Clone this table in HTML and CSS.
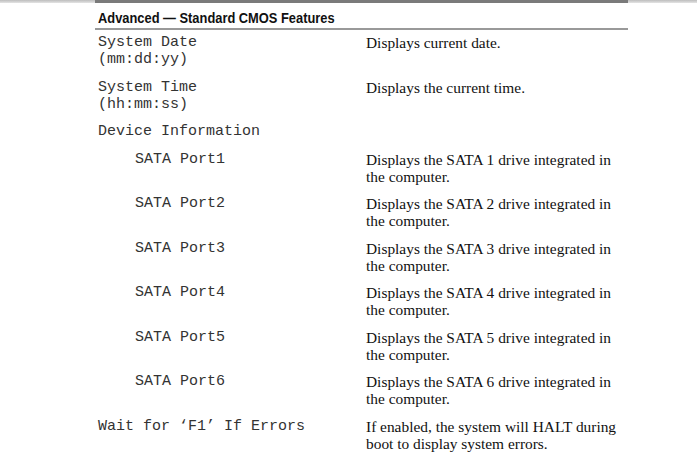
FILE: index.html
```html
<!DOCTYPE html>
<html>
<head>
<meta charset="utf-8">
<link rel="stylesheet" href="styles.css">
</head>
<body>
<div class="topbar"></div>
<div class="table">
  <div class="head"><span class="head-text">Advanced — Standard CMOS Features</span></div>
  <div class="row first"><div class="key">System Date<br>(mm:dd:yy)</div><div class="desc">Displays current date.</div></div>
  <div class="row"><div class="key">System Time<br>(hh:mm:ss)</div><div class="desc">Displays the current time.</div></div>
  <div class="row"><div class="key">Device Information</div><div class="desc"></div></div>
  <div class="row"><div class="key sub">SATA Port1</div><div class="desc">Displays the SATA 1 drive integrated in<br>the computer.</div></div>
  <div class="row"><div class="key sub">SATA Port2</div><div class="desc">Displays the SATA 2 drive integrated in<br>the computer.</div></div>
  <div class="row"><div class="key sub">SATA Port3</div><div class="desc">Displays the SATA 3 drive integrated in<br>the computer.</div></div>
  <div class="row"><div class="key sub">SATA Port4</div><div class="desc">Displays the SATA 4 drive integrated in<br>the computer.</div></div>
  <div class="row"><div class="key sub">SATA Port5</div><div class="desc">Displays the SATA 5 drive integrated in<br>the computer.</div></div>
  <div class="row"><div class="key sub">SATA Port6</div><div class="desc">Displays the SATA 6 drive integrated in<br>the computer.</div></div>
  <div class="row"><div class="key">Wait for ‘F1’ If Errors</div><div class="desc">If enabled, the system will HALT during<br>boot to display system errors.</div></div>
</div>
</body>
</html>
```
FILE: styles.css
```css
html, body {
  margin: 0;
  padding: 0;
  background: #fff;
}
body {
  color: #1a1a1a;
}
.topbar {
  height: 3px;
  background: linear-gradient(#bdbdbd, #e4e4e4);
}
.table {
  margin: -3px 0 0 95px;
  width: 533px;
  border-top: 3px solid #7a7a7a;
}
.head {
  font-family: "Liberation Sans", sans-serif;
  font-weight: bold;
  font-size: 15.5px;
  line-height: 17px;
  padding: 6px 3px 2px;
  border-bottom: 2px solid #999;
  color: #111;
}
.head-text {
  display: inline-block;
  transform: scaleX(0.83);
  transform-origin: left center;
  white-space: nowrap;
}
.row {
  display: grid;
  grid-template-columns: 271px 1fr;
  padding: 5.5px 0 5px;
}
.row.first {
  padding-top: 4px;
}
.key {
  font-family: "Liberation Mono", monospace;
  font-size: 15px;
  line-height: 17px;
  padding-left: 3px;
  color: #333;
}
.key.sub {
  padding-left: 40px;
}
.desc {
  font-family: "Liberation Serif", serif;
  font-size: 15.4px;
  line-height: 17px;
  color: #111;
}
```
